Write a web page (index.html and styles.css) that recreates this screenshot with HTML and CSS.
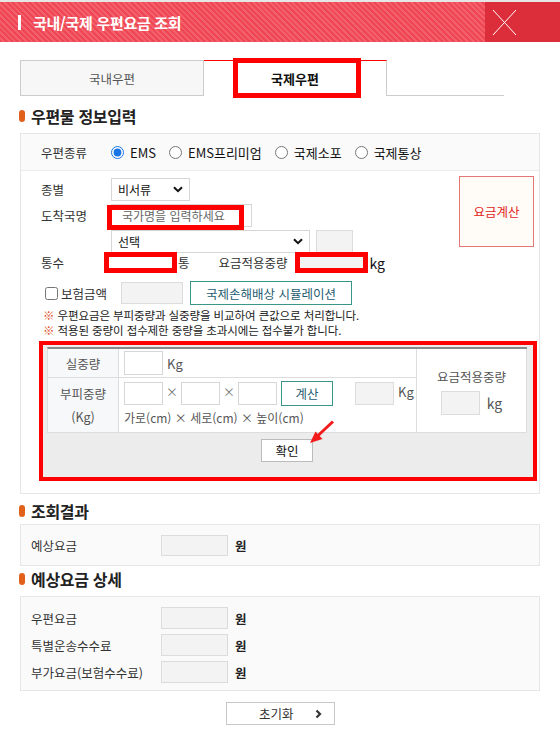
FILE: index.html
```html
<!DOCTYPE html>
<html lang="ko">
<head>
<meta charset="utf-8">
<title>국내/국제 우편요금 조회</title>
<link rel="stylesheet" href="styles.css">
</head>
<body>
<header class="hd">
  <h1 class="hd-title"><span class="hd-bar"></span>국내/국제 우편요금 조회</h1>
  <div class="hd-close"><svg width="75" height="40" viewBox="0 0 75 40"><path d="M8 8 L31 33 M31 8 L8 33" stroke="#fff" stroke-width="1" fill="none"/></svg></div>
</header>

<nav class="tabs">
  <div class="tab">국내우편</div>
  <div class="tab tab-on">국제우편<span class="mark mark-tab"></span></div>
  <div class="tab-rest"></div>
</nav>

<h2 class="sec"><span class="dot"></span>우편물 정보입력</h2>

<section class="info">
  <div class="type-row">
    <span class="lbl">우편종류</span>
    <label class="opt"><input type="radio" name="t" checked>EMS</label>
    <label class="opt"><input type="radio" name="t">EMS프리미엄</label>
    <label class="opt"><input type="radio" name="t">국제소포</label>
    <label class="opt"><input type="radio" name="t">국제통상</label>
  </div>

  <div class="ftop">
    <div class="fields">
      <div class="frow r1">
        <span class="lbl">종별</span>
        <div class="sel sel-s"><span>비서류</span><svg width="10" height="7" viewBox="0 0 10 7"><path d="M1 1.2 L5 5.2 L9 1.2" stroke="#111" stroke-width="2" fill="none"/></svg></div>
      </div>
      <div class="frow r2">
        <span class="lbl">도착국명</span>
        <div class="mwrap"><input class="inp inp-country" type="text" placeholder="국가명을 입력하세요"><span class="mark mark-country"></span></div>
      </div>
      <div class="frow r3">
        <span class="lbl"></span>
        <div class="sel sel-l"><span>선택</span><svg width="10" height="7" viewBox="0 0 10 7"><path d="M1 1.2 L5 5.2 L9 1.2" stroke="#111" stroke-width="2" fill="none"/></svg></div>
        <input class="inp inp-gray inp-code" type="text">
      </div>
      <div class="frow r4">
        <span class="lbl lbl-n">통수</span>
        <div class="mwrap mw-cnt"><input class="inp inp-fill" type="text"><span class="mark mark-fill"></span></div>
        <span class="unit">통</span>
        <span class="lbl-w">요금적용중량</span>
        <div class="mwrap mw-wt"><input class="inp inp-fill inp-gray" type="text"><span class="mark mark-fill"></span></div>
        <span class="kg">kg</span>
      </div>
      <div class="frow r5">
        <label class="chk"><input type="checkbox">보험금액</label>
        <input class="inp inp-gray inp-ins" type="text">
        <button class="tbtn sim">국제손해배상 시뮬레이션</button>
      </div>
    </div>
    <button class="calc">요금계산</button>
  </div>

  <div class="notes">
    <p><span class="ast">※</span> 우편요금은 부피중량과 실중량을 비교하여 큰값으로 처리합니다.</p>
    <p><span class="ast">※</span> 적용된 중량이 접수제한 중량을 초과시에는 접수불가 합니다.</p>
  </div>

  <div class="vol">
    <div class="vt">
      <div class="vc vl">실중량</div>
      <div class="vc vrow1"><input class="inp vin" type="text"><span class="vk">Kg</span></div>
      <div class="vc vres">
        <span class="vres-t">요금적용중량</span>
        <div class="vres-r"><input class="inp inp-gray vin" type="text"><span class="vk2">kg</span></div>
      </div>
      <div class="vc vl vl2"><span>부피중량</span><span>(Kg)</span></div>
      <div class="vc vrow2">
        <div class="dims">
          <input class="inp vin2" type="text"><span class="x">×</span>
          <input class="inp vin2" type="text"><span class="x">×</span>
          <input class="inp vin2" type="text">
          <button class="tbtn calc2">계산</button>
          <input class="inp inp-gray vin2 vgap" type="text"><span class="vk3">Kg</span>
        </div>
        <div class="dim-t">가로(cm) × 세로(cm) × 높이(cm)</div>
      </div>
    </div>
    <div class="vfoot">
      <button class="ok">확인</button>
      <svg class="arrow" width="36" height="30" viewBox="0 0 36 30"><path d="M12 19.5 L28 4.5" stroke="#f21b1b" stroke-width="3" fill="none"/><path d="M5 26 L17.5 22 L10.5 14.5 Z" fill="#f21b1b"/></svg>
    </div>
  </div>
</section>

<h2 class="sec sec2"><span class="dot"></span>조회결과</h2>
<section class="box res">
  <div class="brow"><span class="blbl">예상요금</span><input class="inp inp-gray binp" type="text"><span class="won">원</span></div>
</section>

<h2 class="sec sec3"><span class="dot"></span>예상요금 상세</h2>
<section class="box det">
  <div class="brow"><span class="blbl">우편요금</span><input class="inp inp-gray binp" type="text"><span class="won">원</span></div>
  <div class="brow"><span class="blbl">특별운송수수료</span><input class="inp inp-gray binp" type="text"><span class="won">원</span></div>
  <div class="brow"><span class="blbl">부가요금(보험수수료)</span><input class="inp inp-gray binp" type="text"><span class="won">원</span></div>
</section>

<button class="reset"><span>초기화</span><svg width="7" height="10" viewBox="0 0 7 10"><path d="M1.5 1.5 L5 5 L1.5 8.5" stroke="#333" stroke-width="2.2" fill="none"/></svg></button>
</body>
</html>
```

FILE: styles.css
```css
* { box-sizing: border-box; }
html, body { margin: 0; padding: 0; background: #fff; }
body {
  width: 560px;
  font-family: "Noto Sans CJK KR", "Noto Sans", sans-serif;
  font-size: 12px;
  color: #333;
}
p { margin: 0; }
button { font-family: inherit; cursor: pointer; }

/* header */
.hd {
  display: flex;
  height: 42px;
  border-top: 2px solid #e6e6e6;
  background: repeating-linear-gradient(45deg, #ee4653 0, #ee4653 2px, #f3606c 2px, #f3606c 4px);
}
.hd-title {
  flex: 1;
  margin: 0;
  display: flex;
  align-items: center;
  padding-left: 18px;
  font-size: 15px;
  font-weight: bold;
  color: #fff;
  letter-spacing: -0.3px;
}
.hd-bar {
  width: 3px;
  height: 15px;
  background: #fff;
  margin-right: 12px;
}
.hd-close {
  width: 75px;
  height: 40px;
  background: #dc2d3a;
}
.hd-close svg { display: block; }

/* tabs */
.tabs {
  display: flex;
  width: 484px;
  height: 36px;
  margin: 18px 0 0 20px;
}
.tab {
  width: 184px;
  border: 1px solid #ccc;
  background: #f7f7f7;
  display: flex;
  align-items: center;
  justify-content: center;
  font-size: 12.5px;
  color: #555;
}
.tab-on {
  position: relative;
  width: 183px;
  border: none;
  border-top: 1px solid #f00;
  border-right: 1px solid #ccc;
  background: #fff;
  color: #111;
  font-weight: bold;
  font-size: 13px;
}
.tab-rest {
  flex: 1;
  border-bottom: 1px solid #ccc;
}
.mark {
  position: absolute;
  border: 5px solid #f00;
  pointer-events: none;
}
.mark-tab { left: 29px; top: -3px; width: 128px; height: 40px; }

/* section headings */
.sec {
  display: flex;
  align-items: center;
  height: 20px;
  margin: 10px 0 0 19px;
  font-size: 16px;
  font-weight: bold;
  color: #222;
  letter-spacing: -0.3px;
}
.dot {
  width: 6px;
  height: 12px;
  border-radius: 3px;
  background: #e2611a;
  margin-right: 6px;
}
.sec2 { margin-top: 7px; }
.sec3 { margin-top: 3px; }

/* info box */
.info {
  width: 520px;
  margin: 7px 0 0 20px;
  border: 1px solid #e6e6e6;
  padding-bottom: 12px;
}
.type-row {
  display: flex;
  align-items: center;
  height: 37px;
  padding-left: 20px;
  background: #fafafa;
  border-bottom: 1px solid #ececec;
}
.lbl {
  width: 70px;
  flex-shrink: 0;
  font-size: 12.5px;
  color: #333;
}
.opt {
  display: inline-flex;
  align-items: center;
  margin-right: 13px;
  font-size: 13px;
  color: #111;
}
.opt input {
  width: 13px;
  height: 13px;
  margin: 0 6px 0 0;
  accent-color: #1976e6;
}

.ftop { display: flex; padding-left: 20px; }
.fields { flex: 1; }
.frow { display: flex; align-items: center; height: 23px; }
.r1 { margin-top: 7px; }
.r2, .r3 { margin-top: 3px; }
.r4 { margin-top: -1px; height: 21px; }
.r5 { margin-top: 8px; height: 24px; }

.sel {
  display: flex;
  align-items: center;
  justify-content: space-between;
  height: 23px;
  padding: 0 6px 0 6px;
  border: 1px solid #d6d6d6;
  background: #fff;
  font-size: 12px;
  color: #111;
}
.sel-s { width: 79px; }
.sel-l { width: 199px; }
.sel svg { display: block; }

.inp {
  display: block;
  height: 23px;
  border: 1px solid #d6d6d6;
  background: #fff;
  padding: 0 8px;
  font-family: inherit;
  font-size: 12px;
  outline: none;
}
.inp::placeholder { color: #666; }
.inp-gray { background: #f3f3f3; border-color: #dcdcdc; }
.mwrap { position: relative; }
.inp-country { width: 141px; padding-left: 10px; }
.mark-country { left: -4px; top: 1px; width: 137px; height: 25px; }
.inp-code { width: 37px; margin-left: 6px; }

.lbl-n { width: 63px; }
.mw-cnt, .mw-wt { width: 73px; height: 21px; }
.inp-fill { width: 73px; height: 21px; }
.mark-fill { left: 0; top: 0; width: 73px; height: 21px; }
.mw-wt { margin-left: 1px; }
.unit { font-size: 12.5px; margin-left: 1px; }
.lbl-w { width: 75px; margin-left: 29px; font-size: 12.5px; }
.kg { margin-left: 2px; font-size: 14px; color: #111; }

.chk {
  display: flex;
  align-items: center;
  width: 80px;
  font-size: 12.5px;
}
.chk input {
  width: 13px;
  height: 13px;
  margin: 0 3px 0 4px;
}
.inp-ins { width: 62px; height: 22px; }
.tbtn {
  height: 24px;
  padding: 0;
  border: 1px solid #3a9688;
  background: #fff;
  color: #1f5d72;
  font-size: 12.5px;
}
.sim { width: 162px; margin-left: 7px; }

.calc {
  width: 75px;
  height: 71px;
  margin: 5px 5px 0 0;
  flex-shrink: 0;
  border: 1px solid #e57676;
  background: #fffbf6;
  color: #e1251b;
  font-size: 12.5px;
}

.notes {
  margin-top: 3px;
  padding-left: 22px;
  font-size: 11.5px;
  line-height: 15px;
  color: #222;
  letter-spacing: -0.1px;
}
.ast { color: #e0531f; }

/* volume box */
.vol {
  width: 498px;
  margin: 3px 0 0 18px;
  border: 4px solid #f00;
  background: #ececec;
  padding: 2px 6px 15px 4px;
}
.vt {
  display: grid;
  grid-template-columns: 71px 298px 110px;
  grid-template-rows: 29px 55px;
  border-top: 2px solid #8a8a8a;
  border-left: 1px solid #ddd;
  background: #fff;
}
.vc {
  border-right: 1px solid #ddd;
  border-bottom: 1px solid #ddd;
}
.vl {
  display: flex;
  flex-direction: column;
  align-items: center;
  justify-content: center;
  background: #f7f8fa;
  font-size: 12.5px;
  color: #555;
}
.vl2 span { line-height: 23px; }
.vrow1 { display: flex; align-items: center; padding-left: 5px; }
.vin { width: 39px; height: 24px; }
.vk { margin-left: 4px; font-size: 13px; color: #555; }
.vres {
  grid-row: 1 / span 2;
  grid-column: 3;
  display: flex;
  flex-direction: column;
  align-items: center;
  justify-content: center;
  padding-top: 2px;
}
.vres-t { font-size: 12.5px; color: #555; line-height: 16px; }
.vres-r { display: flex; align-items: center; margin-top: 6px; }
.vk2 { margin-left: 7px; font-size: 14px; color: #555; }
.vrow2 { padding: 3px 0 0 5px; }
.dims { display: flex; align-items: center; height: 25px; }
.vin2 { width: 39px; height: 23px; }
.x {
  width: 18px;
  text-align: center;
  align-self: flex-start;
  margin-top: 2px;
  font-size: 12px;
  color: #777;
}
.calc2 { width: 52px; height: 25px; margin-left: 4px; }
.vgap { margin-left: 22px; }
.vk3 { margin-left: 4px; font-size: 13px; color: #555; align-self: flex-start; margin-top: 1px; }
.dim-t { margin-top: 2px; line-height: 20px; font-size: 12px; color: #555; }

.vfoot {
  position: relative;
  display: flex;
  justify-content: center;
  margin-top: 6px;
}
.ok {
  width: 52px;
  height: 23px;
  padding: 0;
  border: 1px solid #bbb;
  background: #fff;
  color: #111;
  font-size: 12.5px;
}
.arrow { position: absolute; left: 258px; top: -22px; }

/* result boxes */
.box {
  width: 520px;
  margin: 3px 0 0 20px;
  border: 1px solid #e6e6e6;
  background: #fafafa;
  padding: 10px 0 9px 10px;
}
.det { margin-top: 7px; padding-bottom: 7px; }
.brow { display: flex; align-items: center; height: 22px; }
.brow + .brow { margin-top: 5px; }
.res .brow { height: 21px; }
.blbl { width: 130px; font-size: 12.5px; color: #333; }
.binp { width: 67px; height: 100%; }
.won { margin-left: 7px; font-size: 12.5px; font-weight: bold; color: #222; }

.reset {
  display: flex;
  align-items: center;
  width: 109px;
  height: 23px;
  margin: 11px 0 0 226px;
  padding: 0 0 0 32px;
  border: 1px solid #c8c8c8;
  background: #fff;
  color: #333;
  font-size: 12.5px;
}
.reset svg { margin-left: 21px; display: block; }
```
